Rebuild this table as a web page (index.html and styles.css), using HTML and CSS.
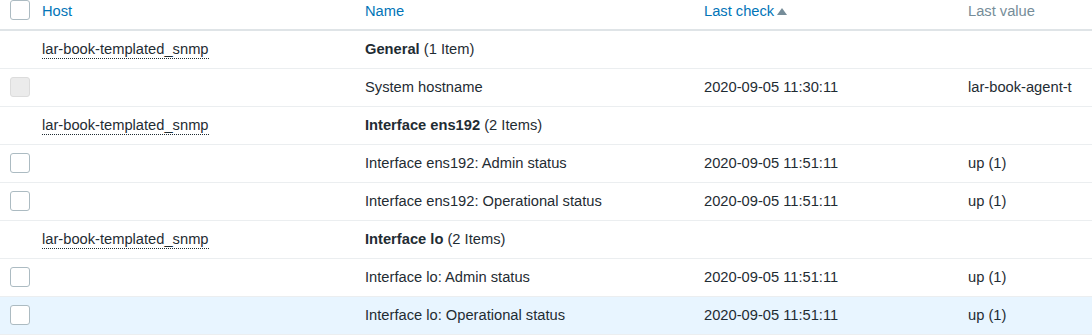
FILE: index.html
```html
<!DOCTYPE html>
<html>
<head>
<meta charset="utf-8">
<link rel="stylesheet" href="styles.css">
</head>
<body>
<table class="list">
  <colgroup>
    <col class="c-check"><col class="c-host"><col class="c-name"><col class="c-time"><col class="c-value">
  </colgroup>
  <thead>
    <tr>
      <th><span class="checkbox"></span></th>
      <th><a class="sort-link">Host</a></th>
      <th><a class="sort-link">Name</a></th>
      <th><a class="sort-link">Last check</a><span class="arrow-up"></span></th>
      <th class="plain">Last value</th>
    </tr>
  </thead>
  <tbody>
    <tr class="group">
      <td></td>
      <td><span class="host-link">lar-book-templated_snmp</span></td>
      <td><b>General</b> (1 Item)</td>
      <td></td>
      <td></td>
    </tr>
    <tr>
      <td><span class="checkbox disabled"></span></td>
      <td></td>
      <td>System hostname</td>
      <td>2020-09-05 11:30:11</td>
      <td>lar-book-agent-t</td>
    </tr>
    <tr class="group">
      <td></td>
      <td><span class="host-link">lar-book-templated_snmp</span></td>
      <td><b>Interface ens192</b> (2 Items)</td>
      <td></td>
      <td></td>
    </tr>
    <tr>
      <td><span class="checkbox"></span></td>
      <td></td>
      <td>Interface ens192: Admin status</td>
      <td>2020-09-05 11:51:11</td>
      <td>up (1)</td>
    </tr>
    <tr>
      <td><span class="checkbox"></span></td>
      <td></td>
      <td>Interface ens192: Operational status</td>
      <td>2020-09-05 11:51:11</td>
      <td>up (1)</td>
    </tr>
    <tr class="group">
      <td></td>
      <td><span class="host-link">lar-book-templated_snmp</span></td>
      <td><b>Interface lo</b> (2 Items)</td>
      <td></td>
      <td></td>
    </tr>
    <tr>
      <td><span class="checkbox"></span></td>
      <td></td>
      <td>Interface lo: Admin status</td>
      <td>2020-09-05 11:51:11</td>
      <td>up (1)</td>
    </tr>
    <tr class="hover">
      <td><span class="checkbox"></span></td>
      <td></td>
      <td>Interface lo: Operational status</td>
      <td>2020-09-05 11:51:11</td>
      <td>up (1)</td>
    </tr>
  </tbody>
</table>
</body>
</html>
```

FILE: styles.css
```css
html, body {
  margin: 0;
  padding: 0;
  background: #ffffff;
}
body {
  font-family: "Liberation Sans", Arial, sans-serif;
  font-size: 14.7px;
  color: #1f2c33;
}
.list {
  width: 1092px;
  border-collapse: collapse;
  table-layout: fixed;
}
.c-check { width: 32px; }
.c-host { width: 323px; }
.c-name { width: 339px; }
.c-time { width: 264px; }
.c-value { width: 134px; }

.list th {
  height: 30px;
  padding: 0 10px;
  box-sizing: border-box;
  text-align: left;
  font-weight: normal;
  vertical-align: top;
  white-space: nowrap;
  border-bottom: 2px solid #dfe4e7;
}
.list th a, .list th.plain { line-height: 22px; }
.sort-link { color: #0275b8; }
.plain { color: #768d99; }
.arrow-up {
  display: inline-block;
  width: 0;
  height: 0;
  margin-left: 3px;
  border-left: 5px solid transparent;
  border-right: 5px solid transparent;
  border-bottom: 7px solid #768d99;
  vertical-align: 1px;
}
.list td {
  height: 38px;
  padding: 0 10px;
  box-sizing: border-box;
  border-bottom: 1px solid #ebeef0;
  vertical-align: middle;
  white-space: nowrap;
  overflow: hidden;
}
.list tr.hover td { background: #e8f5ff; }
.list td b { font-weight: bold; }
.host-link {
  border-bottom: 1px dotted #1f2c33;
  padding-bottom: 1px;
}
.checkbox {
  display: block;
  width: 20px;
  height: 20px;
  box-sizing: border-box;
  border: 1px solid #acbbc2;
  border-radius: 3px;
  background: #ffffff;
}
.checkbox.disabled {
  background: #ebebeb;
  border-color: #dcdcdc;
}
```
